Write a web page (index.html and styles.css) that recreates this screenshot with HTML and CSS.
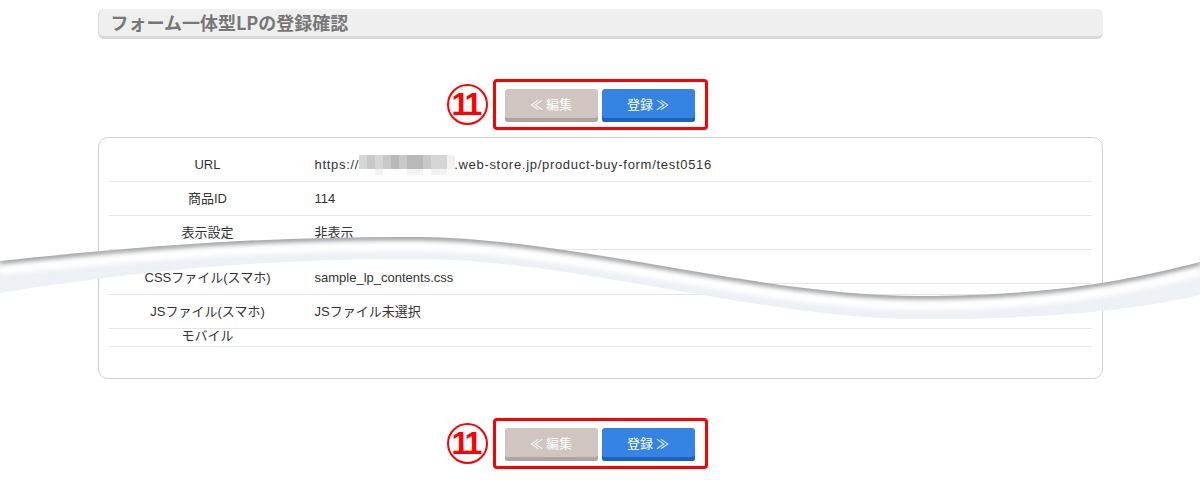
FILE: index.html
```html
<!DOCTYPE html>
<html lang="ja">
<head>
    <meta charset="UTF-8">
    <title>フォーム一体型LPの登録確認</title>
    <link rel="stylesheet" href="styles.css">
</head>
<body>
    <div class="page">
        <div class="title-bar">
            <h2>フォーム一体型LPの登録確認</h2>
        </div>

        <div class="actions">
            <div class="btn-box">
                <span class="mark">11</span>
                <button class="btn btn-back">≪ 編集</button>
                <button class="btn btn-submit">登録 ≫</button>
            </div>
        </div>

        <div class="card">
            <table class="confirm">
                <tr>
                    <th>URL</th>
                    <td class="url">https://<span class="mosaic"><i class="m3"></i><i class="m2"></i><i class="m3"></i><i class="m2"></i><i class="m1"></i><i class="m2"></i><i class="m1"></i><i class="m1"></i><i class="m2"></i><i class="m3"></i><i class="m3"></i><i class="m4"></i><i class="m5"></i><i class="m5"></i><i class="m4"></i><i class="m5"></i><i class="m5"></i><i class="m5"></i><i class="m4"></i><i class="m4"></i><i class="m5"></i><i class="m4"></i><i class="m4"></i><i class="m5"></i></span>.web-store.jp/product-buy-form/test0516</td>
                </tr>
                <tr>
                    <th>商品ID</th>
                    <td>114</td>
                </tr>
                <tr>
                    <th>表示設定</th>
                    <td>非表示</td>
                </tr>
                <tr class="cut">
                    <th></th>
                    <td></td>
                </tr>
                <tr>
                    <th>CSSファイル(スマホ)</th>
                    <td>sample_lp_contents.css</td>
                </tr>
                <tr>
                    <th>JSファイル(スマホ)</th>
                    <td>JSファイル未選択</td>
                </tr>
                <tr class="short">
                    <th>モバイル</th>
                    <td></td>
                </tr>
            </table>
        </div>

        <div class="actions">
            <div class="btn-box">
                <span class="mark">11</span>
                <button class="btn btn-back">≪ 編集</button>
                <button class="btn btn-submit">登録 ≫</button>
            </div>
        </div>
    </div>

    <!-- torn page: part of the form is left out -->
    <svg class="tear" width="1200" height="100" viewBox="0 0 1200 100">
        <defs>
            <clipPath id="band">
                <path d="M0,36 C150,20 280,11 420,12 C580,14 760,71 920,71 C1050,71 1130,55 1200,37 L1200,70 C1130,86 1050,94 920,94 C760,94 580,35 420,34 C280,33 150,44 0,68 Z"/>
            </clipPath>
            <filter id="soft" x="-5%" y="-50%" width="110%" height="200%">
                <feGaussianBlur stdDeviation="2.4"/>
            </filter>
        </defs>
        <line x1="640" y1="58.5" x2="1091" y2="58.5" stroke="#e6e6e6" stroke-width="1"/>
        <g clip-path="url(#band)">
            <rect x="0" y="0" width="1200" height="100" fill="#edf0f4"/>
            <path d="M0,45 C150,29 280,20 420,21 C580,23 760,80 920,80 C1050,80 1130,64 1200,46" fill="none" stroke="#ffffff" stroke-width="10" filter="url(#soft)"/>
            <path d="M0,36 C150,20 280,11 420,12 C580,14 760,71 920,71 C1050,71 1130,55 1200,37" fill="none" stroke="#8c8c8c" stroke-width="5" filter="url(#soft)"/>
        </g>
    </svg>
</body>
</html>
```

FILE: styles.css
```css
body {
    margin: 0;
    padding: 0;
    background: #fff;
    font-family: "Liberation Sans", "Noto Sans CJK JP", sans-serif;
    font-size: 13px;
    color: #333;
}
.page {
    width: 1005px;
    margin: 0 auto;
    padding-top: 9px;
}
.title-bar {
    height: 27px;
    background: #efefef;
    border-bottom: 3px solid #d9d9d9;
    border-left: 1px solid #dcdcdc;
    border-radius: 6px;
}
.title-bar h2 {
    margin: 0;
    padding-left: 12px;
    font-family: "Noto Sans CJK JP", sans-serif;
    font-size: 18px;
    line-height: 26px;
    font-weight: bold;
    color: #777;
}
.actions {
    display: flex;
    justify-content: center;
    margin-top: 40px;
}
.card + .actions {
    margin-top: 39px;
}
.btn-box {
    position: relative;
    display: flex;
    gap: 4px;
    padding: 7px 10px 5px 9px;
    border: 3px solid #f00;
    border-radius: 4px;
}
.mark {
    position: absolute;
    left: -49px;
    top: 2px;
    width: 41px;
    height: 41px;
    box-sizing: border-box;
    border: 2px solid #f00;
    border-radius: 50%;
    color: #f00;
    font-family: "Liberation Sans", sans-serif;
    font-weight: bold;
    font-size: 32px;
    line-height: 37px;
    letter-spacing: -3px;
    text-indent: -3px;
    text-align: center;
}
.btn {
    width: 93px;
    height: 33px;
    padding: 0 0 4px;
    border: none;
    border-radius: 3px;
    color: #fff;
    font-family: "Noto Sans CJK JP", sans-serif;
    font-size: 13px;
    cursor: pointer;
}
.btn-back {
    background: #d0c5c0;
    box-shadow: inset 0 -4px 0 #b0a4a0;
}
.btn-submit {
    background: #3584e4;
    box-shadow: inset 0 -4px 0 #1a62c4;
}
.card {
    margin-top: 7px;
    padding: 10px 10px 31px;
    border: 1px solid #cfcfcf;
    border-radius: 10px;
}
.confirm {
    width: 100%;
    border-collapse: collapse;
}
.confirm th,
.confirm td {
    height: 33px;
    padding: 0;
    border-bottom: 1px solid #e6e6e6;
    font-weight: normal;
    line-height: 16px;
    vertical-align: middle;
}
.confirm th {
    width: 198px;
    text-align: center;
}
.confirm td {
    padding-left: 8px;
    text-align: left;
}
.confirm td.url {
    letter-spacing: 0.7px;
}
.confirm .cut th,
.confirm .cut td {
    height: 11px;
    border-bottom: none;
}
.confirm .short th,
.confirm .short td {
    height: 17px;
    vertical-align: top;
    line-height: 14px;
}
.mosaic {
    display: inline-grid;
    grid-template-columns: repeat(12, 8px);
    grid-template-rows: 14px 6px;
    margin: -8px -1px -6px 0;
    vertical-align: baseline;
}
.mosaic i { display: block; }
.mosaic .m1 { background: #b9b9b9; }
.mosaic .m2 { background: #c9c9c9; }
.mosaic .m3 { background: #d6d6d6; }
.mosaic .m4 { background: #f2f2f2; }
.mosaic .m5 { background: #fff; }
.tear {
    position: absolute;
    left: 0;
    top: 225px;
}
```
